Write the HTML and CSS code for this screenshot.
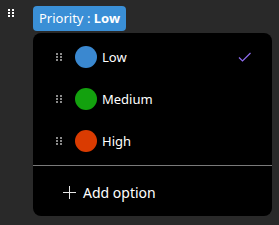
FILE: index.html
```html
<!DOCTYPE html>
<html>
<head>
<meta charset="utf-8">
<link rel="stylesheet" href="styles.css">
</head>
<body>
<div class="top">
  <span class="grip grip-white"><i></i><i></i><i></i><i></i><i></i><i></i></span>
  <span class="pill">Priority : <b>Low</b></span>
</div>
<div class="panel">
  <div class="row">
    <span class="grip grip-gray"><i></i><i></i><i></i><i></i><i></i><i></i></span>
    <span class="dot blue"></span>
    <span class="label">Low</span>
    <svg class="check" width="14" height="10" viewBox="0 0 14 10"><path d="M1 5.5 L4.5 9 L12.5 1" fill="none" stroke="#8f6cf0" stroke-width="1.2"/></svg>
  </div>
  <div class="row">
    <span class="grip grip-gray"><i></i><i></i><i></i><i></i><i></i><i></i></span>
    <span class="dot green"></span>
    <span class="label">Medium</span>
  </div>
  <div class="row">
    <span class="grip grip-gray"><i></i><i></i><i></i><i></i><i></i><i></i></span>
    <span class="dot orange"></span>
    <span class="label">High</span>
  </div>
  <div class="divider"></div>
  <div class="add">
    <svg class="plus" width="13" height="13" viewBox="0 0 13 13"><path d="M6.5 0 V13 M0 6.5 H13" stroke="#e6e6e6" stroke-width="1"/></svg>
    <span>Add option</span>
  </div>
</div>
</body>
</html>
```
FILE: styles.css
```css
html, body { margin: 0; padding: 0; }
body {
  background: #292929;
  width: 279px;
  height: 225px;
  overflow: hidden;
  font-family: "Noto Sans", "Open Sans", sans-serif;
  color: #ffffff;
}
.top {
  display: flex;
  align-items: flex-start;
  height: 33px;
}
.grip {
  display: grid;
  grid-template-columns: 2px 2px;
  grid-auto-rows: 2px;
  column-gap: 2px;
  row-gap: 1px;
}
.grip i { display: block; width: 2px; height: 2px; }
.grip-white { margin: 9px 0 0 8px; }
.grip-white i { background: #ffffff; }
.grip-gray i { background: #8a8a8a; }
.pill {
  margin: 6px 0 0 19px;
  height: 25px;
  box-sizing: border-box;
  padding: 0 6px;
  background: #3a8fd6;
  border-radius: 4px;
  font-size: 13px;
  line-height: 25px;
  color: #ffffff;
  white-space: nowrap;
}
.pill b { font-weight: 700; }
.panel {
  margin-left: 33px;
  width: 239px;
  height: 183px;
  background: #000000;
  border-radius: 8px;
  box-sizing: border-box;
  padding-top: 3px;
}
.row {
  display: flex;
  align-items: center;
  height: 42px;
  padding-left: 23px;
  position: relative;
}
.row .grip { margin-right: 13px; }
.dot {
  width: 22px;
  height: 22px;
  border-radius: 50%;
  margin-right: 5px;
}
.blue { background: #3a88d0; }
.green { background: #13a10e; }
.orange { background: #da3b01; }
.label { font-size: 13px; }
.check { margin-left: auto; margin-right: 20px; }
.divider {
  margin-top: 3px;
  height: 1px;
  background: #7a7a7a;
}
.add {
  display: flex;
  align-items: center;
  height: 52px;
  padding-left: 30px;
  font-size: 14px;
}
.plus { margin-right: 7px; }
```
